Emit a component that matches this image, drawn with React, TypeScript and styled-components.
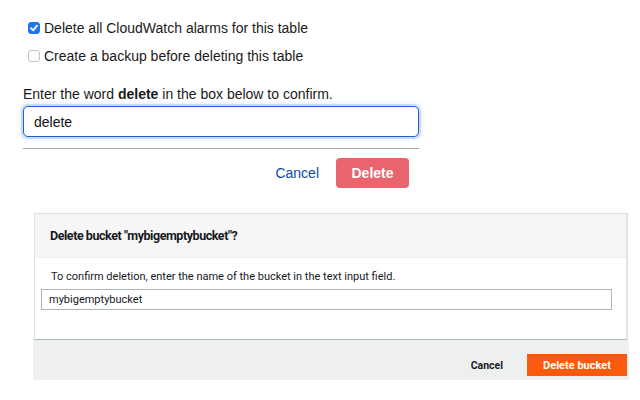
import { FC } from "react";
import styled, { createGlobalStyle } from "styled-components";

const GlobalStyle = createGlobalStyle`
  * { box-sizing: border-box; }
  body {
    margin: 0;
    background: #ffffff;
    font-family: "Liberation Sans", Arial, sans-serif;
    color: #111;
  }
`;

interface CheckProps {
  checked?: boolean;
  label: string;
}

const Check: FC<CheckProps> = ({ checked, label }) => (
  <CheckRow>
    <Box checked={checked}>
      {checked && (
        <svg width="10" height="10" viewBox="0 0 10 10">
          <path
            d="M2 5.2 L4.2 7.4 L8 2.6"
            fill="none"
            stroke="#fff"
            strokeWidth="1.8"
            strokeLinecap="round"
            strokeLinejoin="round"
          />
        </svg>
      )}
    </Box>
    <span>{label}</span>
  </CheckRow>
);

const App: FC = () => {
  return (
    <>
      <GlobalStyle />
      <Page>
        <TableDelete>
          <Checks>
            <Check checked label="Delete all CloudWatch alarms for this table" />
            <Check label="Create a backup before deleting this table" />
          </Checks>
          <Prompt>
            Enter the word <b>delete</b> in the box below to confirm.
          </Prompt>
          <FocusInput defaultValue="delete" />
          <Divider />
          <Actions>
            <LinkButton>Cancel</LinkButton>
            <DangerButton>Delete</DangerButton>
          </Actions>
        </TableDelete>

        <BucketDialog>
          <Panel>
            <PanelHeader>Delete bucket "mybigemptybucket"?</PanelHeader>
            <PanelBody>
              <Hint>
                To confirm deletion, enter the name of the bucket in the text
                input field.
              </Hint>
              <FlatInput defaultValue="mybigemptybucket" />
            </PanelBody>
          </Panel>
          <Footer>
            <PlainButton>Cancel</PlainButton>
            <OrangeButton>Delete bucket</OrangeButton>
          </Footer>
        </BucketDialog>
      </Page>
    </>
  );
};

export default App;

// стили
const Page = styled.div`
  width: 640px;
  height: 400px;
  overflow: hidden;
  display: flex;
  flex-direction: column;
`;

const TableDelete = styled.section`
  margin-left: 23px;
  width: 396px;
  padding-top: 19px;
  display: flex;
  flex-direction: column;
  font-size: 14px;
`;

const Checks = styled.div`
  display: flex;
  flex-direction: column;
  gap: 10px;
  padding-left: 5px;
`;

const CheckRow = styled.label`
  display: flex;
  align-items: center;
  gap: 4px;
  height: 18px;
  color: #1a1a1a;
`;

const Box = styled.span<{ checked?: boolean }>`
  width: 12px;
  height: 12px;
  border-radius: 3px;
  display: flex;
  align-items: center;
  justify-content: center;
  background: ${(p) => (p.checked ? "#1f74f0" : "#fff")};
  border: 1px solid ${(p) => (p.checked ? "#1f74f0" : "#c4c4c4")};
`;

const Prompt = styled.p`
  margin: 20px 0 0;
  line-height: 18px;
  color: #1a1a1a;
`;

const FocusInput = styled.input`
  margin-top: 3px;
  height: 31px;
  width: 100%;
  border: 1.5px solid #1d5fd6;
  border-radius: 5px;
  box-shadow: 0 0 0 2px #c9dcf7, 0 0 5px 2px #dbe8fa;
  padding: 0 10px;
  font: 14px "Liberation Sans", Arial, sans-serif;
  color: #111;
  outline: none;
`;

const Divider = styled.hr`
  margin: 11px 0 0;
  border: none;
  border-top: 1px solid #a9a9a9;
`;

const Actions = styled.div`
  display: flex;
  justify-content: flex-end;
  align-items: center;
  gap: 17px;
  padding: 9px 10px 0 0;
`;

const LinkButton = styled.span`
  color: #0b49a8;
  font-size: 14px;
`;

const DangerButton = styled.button`
  width: 73px;
  height: 30px;
  border: none;
  border-radius: 4px;
  background: #e9646c;
  color: #fff;
  font: bold 14px "Liberation Sans", Arial, sans-serif;
`;

const BucketDialog = styled.section`
  margin: 25px 0 0 33px;
  width: 596px;
  display: flex;
  flex-direction: column;
  font-family: Roboto, "Liberation Sans", sans-serif;
`;

const Panel = styled.div`
  margin-left: 1px;
  margin-right: 2px;
  border: 1px solid #dde2e2;
  border-bottom: 1px solid #aab4b6;
  background: #fff;
  box-shadow: 1px 0 1px #e4e8e8;
`;

const PanelHeader = styled.h2`
  margin: 0;
  height: 44px;
  padding: 0 15px;
  display: flex;
  align-items: center;
  background: #f6f6f6;
  border-bottom: 1px solid #eeeeee;
  font-size: 12.5px;
  letter-spacing: -0.45px;
  font-weight: bold;
  color: #16191f;
`;

const PanelBody = styled.div`
  padding: 12px 16px 29px 6px;
`;

const Hint = styled.p`
  margin: 0 0 5px 10px;
  font-size: 11px;
  line-height: 13px;
  color: #16191f;
`;

const FlatInput = styled.input`
  width: 571px;
  height: 21px;
  border: 1px solid #aab7b8;
  padding: 0 7px;
  font: 11px Roboto, "Liberation Sans", sans-serif;
  color: #16191f;
  outline: none;
`;

const Footer = styled.div`
  height: 40px;
  background: #eef0f0;
  display: flex;
  justify-content: flex-end;
  align-items: center;
  gap: 24px;
  padding: 10px 2px 0 0;
`;

const PlainButton = styled.span`
  font-size: 10.5px;
  font-weight: bold;
  color: #16191f;
`;

const OrangeButton = styled.button`
  width: 100px;
  height: 22px;
  border: none;
  background: #fb5a0d;
  color: #fff;
  font: bold 11px Roboto, "Liberation Sans", sans-serif;
`;
